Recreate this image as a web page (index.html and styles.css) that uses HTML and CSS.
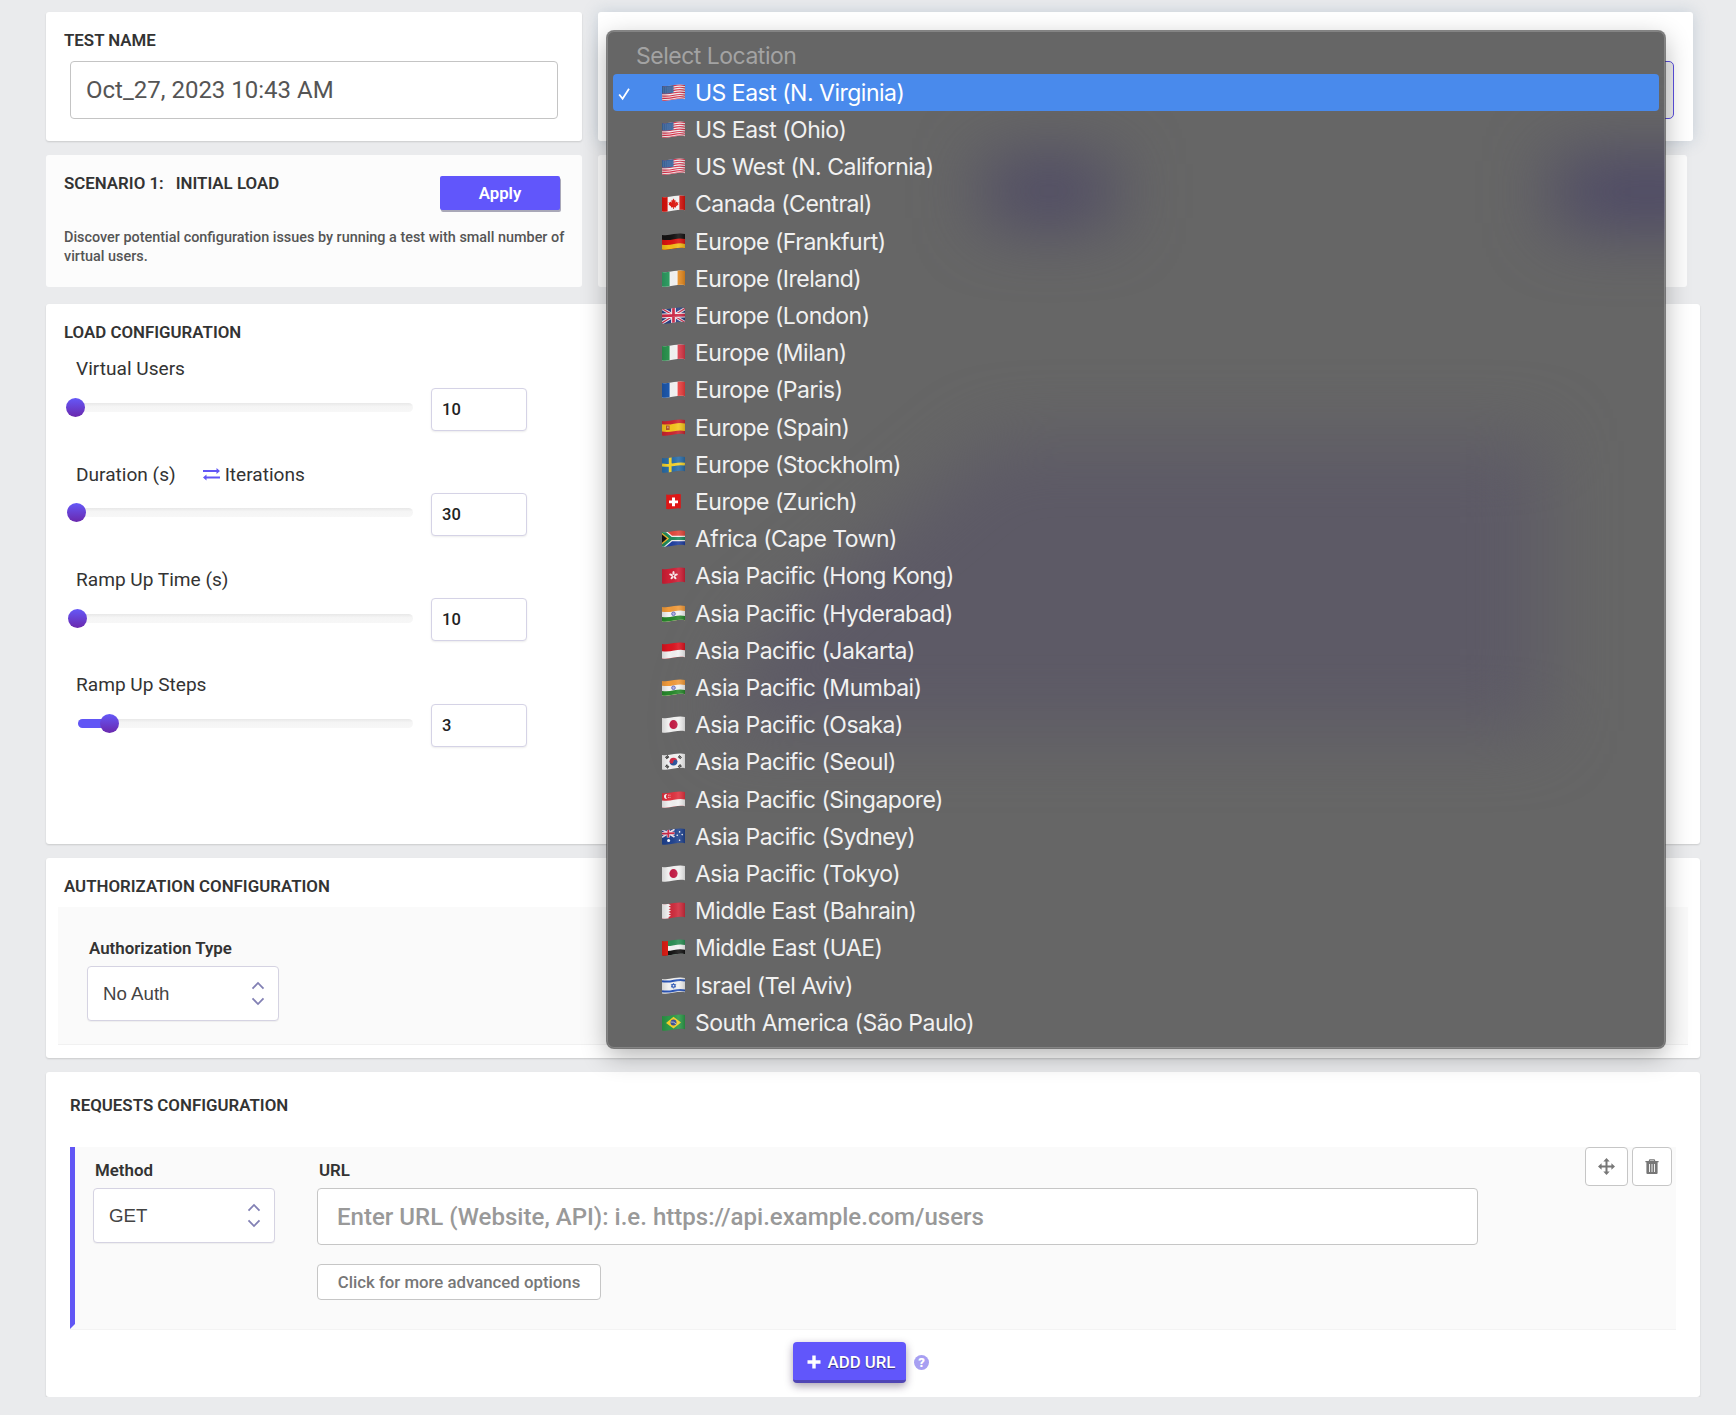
FILE: index.html
```html
<!DOCTYPE html>
<html lang="en">
<head>
    <meta charset="UTF-8">
    <meta name="viewport" content="width=device-width, initial-scale=1.0">
    <title>Load Test</title>
    <link rel="stylesheet" href="styles.css">
</head>
<body>

    <!-- Flag and icon symbols -->
    <svg class="symbols" width="0" height="0" aria-hidden="true">
        <defs>
            <clipPath id="wave"><path d="M0 1.9 C4 2.6 8 1.9 12 1.1 C16 .3 20 .2 23 1 V15.2 C20 14.5 16 14.7 12 15.5 C8 16.3 4 17 0 16.4Z"/></clipPath>
            <linearGradient id="shade" x1="0" x2="1" y1="0" y2="0">
                <stop offset="0" stop-color="#000" stop-opacity=".12"/>
                <stop offset=".3" stop-color="#000" stop-opacity="0"/>
                <stop offset=".7" stop-color="#fff" stop-opacity=".1"/>
                <stop offset="1" stop-color="#000" stop-opacity=".16"/>
            </linearGradient>
            <filter id="soft" x="-50%" y="-50%" width="200%" height="200%" color-interpolation-filters="sRGB"><feGaussianBlur stdDeviation="34"/></filter>
        </defs>
        <symbol id="us" viewBox="0 0 23 17"><g clip-path="url(#wave)"><path fill="#f4eef0" d="M0 0h23v17H0z"/><path stroke="#d8324a" stroke-width="1.15" fill="none" d="M0 2.4q6 .6 12-.8t11-.1M0 4.8q6 .6 12-.8t11-.1M0 7.2q6 .6 12-.8t11-.1M0 9.6q6 .6 12-.8t11-.1M0 12q6 .6 12-.8t11-.1M0 14.2q6 .6 12-.8t11-.1M0 16.4q6 .6 12-.8t11-.1"/><path fill="#3d679f" d="M0 0h11.5v8.8q-6 1.2-11.5.8z"/><path stroke="#9fb9d6" stroke-width=".6" stroke-dasharray=".7 1.2" fill="none" d="M1 4h10M1 6h10M1 8h10"/><path fill="url(#shade)" d="M0 0h23v17H0z"/></g></symbol>
        <symbol id="ca" viewBox="0 0 23 17"><g clip-path="url(#wave)"><path fill="#f4f4f4" d="M0 0h23v17H0z"/><path fill="#d8130d" d="M0 0h5.6v17H0zM17.4 0H23v17h-5.6z"/><path fill="#e01a12" d="M11.5 3.6l1.2 2 1-.4-.3 2.6 1.3-1.2.4.9 1.4-.2-.6 1.6.7.5-2.7 2.2.2 1-2.2-.3v1.6h-.8v-1.6l-2.2.3.2-1-2.7-2.2.7-.5-.6-1.6 1.4.2.4-.9 1.3 1.2-.3-2.6 1 .4z"/><path fill="url(#shade)" d="M0 0h23v17H0z"/></g></symbol>
        <symbol id="de" viewBox="0 0 23 17"><g clip-path="url(#wave)"><path fill="#141212" d="M0 0h23v17H0z"/><path fill="#dc1410" d="M0 6.8q6 .8 12-.6t11-.1V17H0z"/><path fill="#f3bd16" d="M0 11.7q6 .8 12-.6t11-.1V17H0z"/><path fill="url(#shade)" d="M0 0h23v17H0z"/></g></symbol>
        <symbol id="ie" viewBox="0 0 23 17"><g clip-path="url(#wave)"><path fill="#f4f4f4" d="M0 0h23v17H0z"/><path fill="#2f9d63" d="M0 0h7.6v17H0z"/><path fill="#e58a1f" d="M15.6 0H23v17h-7.4z"/><path fill="url(#shade)" d="M0 0h23v17H0z"/></g></symbol>
        <symbol id="gb" viewBox="0 0 23 17"><g clip-path="url(#wave)"><path fill="#283f83" d="M0 0h23v17H0z"/><path stroke="#efeaf0" stroke-width="3.2" d="M0 1.5l23 14M0 16L23 1.5"/><path stroke="#d02a48" stroke-width="1.1" d="M0 1.5l23 14M0 16L23 1.5"/><path stroke="#f4eef2" stroke-width="4.8" d="M11.5 0v17M0 8.9l23-.8"/><path stroke="#d02a48" stroke-width="2.7" d="M11.5 0v17M0 8.9l23-.8"/><path fill="url(#shade)" d="M0 0h23v17H0z"/></g></symbol>
        <symbol id="it" viewBox="0 0 23 17"><g clip-path="url(#wave)"><path fill="#f4f4f4" d="M0 0h23v17H0z"/><path fill="#2c9550" d="M0 0h7.6v17H0z"/><path fill="#d93646" d="M15.6 0H23v17h-7.4z"/><path fill="url(#shade)" d="M0 0h23v17H0z"/></g></symbol>
        <symbol id="fr" viewBox="0 0 23 17"><g clip-path="url(#wave)"><path fill="#f4f4f4" d="M0 0h23v17H0z"/><path fill="#1c58ad" d="M0 0h7.6v17H0z"/><path fill="#ea3c3c" d="M15.6 0H23v17h-7.4z"/><path fill="url(#shade)" d="M0 0h23v17H0z"/></g></symbol>
        <symbol id="es" viewBox="0 0 23 17"><g clip-path="url(#wave)"><path fill="#cb2530" d="M0 0h23v17H0z"/><path fill="#f5c71c" d="M0 5.3q6 .8 12-.6t11-.1v7.4q-5-1-11 .2t-12 .4z"/><path fill="#b0562c" d="M4 6.5h3.6v4.4H4z"/><path fill="#e3b19a" d="M5.2 7.6h1.3v1.6H5.2z"/><path fill="url(#shade)" d="M0 0h23v17H0z"/></g></symbol>
        <symbol id="se" viewBox="0 0 23 17"><g clip-path="url(#wave)"><path fill="#2a6da8" d="M0 0h23v17H0z"/><path stroke="#f5d22c" stroke-width="2.8" fill="none" d="M8.2 0v17M0 9q6 .8 12-.4t11-.4"/><path fill="url(#shade)" d="M0 0h23v17H0z"/></g></symbol>
        <symbol id="ch" viewBox="0 0 23 17"><path fill="#dd1717" d="M4.2 1.6q4 .6 7.4-.2t7.2-.2v14.2q-4-.4-7.4.3t-7.2.4z"/><path fill="#fff" d="M10 4.5h3v2.9h3v2.9h-3v2.9h-3v-2.9H7V7.4h3z"/></symbol>
        <symbol id="za" viewBox="0 0 23 17"><g clip-path="url(#wave)"><path fill="#e3483c" d="M0 0h23v8H0z"/><path fill="#1f3ea0" d="M0 8.5h23V17H0z"/><path stroke="#f2f2f2" stroke-width="5.6" fill="none" d="M-1 0l10 8.5L-1 17M9 8.5h14"/><path stroke="#1f8a5c" stroke-width="3.2" fill="none" d="M-1 0l10 8.5L-1 17M9 8.5h14"/><path fill="#f0b62a" d="M0 2.8l7 5.7-7 6z"/><path fill="#111" d="M0 4.4l5 4.1-5 4.3z"/><path fill="url(#shade)" d="M0 0h23v17H0z"/></g></symbol>
        <symbol id="hk" viewBox="0 0 23 17"><g clip-path="url(#wave)"><path fill="#cf1f36" d="M0 0h23v17H0z"/><g fill="#fbe9ec"><ellipse cx="11.5" cy="6" rx="1.1" ry="2"/><ellipse cx="11.5" cy="6" rx="1.1" ry="2" transform="rotate(72 11.5 8.5)"/><ellipse cx="11.5" cy="6" rx="1.1" ry="2" transform="rotate(144 11.5 8.5)"/><ellipse cx="11.5" cy="6" rx="1.1" ry="2" transform="rotate(216 11.5 8.5)"/><ellipse cx="11.5" cy="6" rx="1.1" ry="2" transform="rotate(288 11.5 8.5)"/></g><path fill="url(#shade)" d="M0 0h23v17H0z"/></g></symbol>
        <symbol id="in" viewBox="0 0 23 17"><g clip-path="url(#wave)"><path fill="#f29b3a" d="M0 0h23v17H0z"/><path fill="#f4f4f4" d="M0 6.8q6 .8 12-.6t11-.3V17H0z"/><path fill="#28892c" d="M0 11.9q6 .8 12-.6t11-.3V17H0z"/><circle cx="11.5" cy="8.8" r="1.8" fill="#b4b4e4" stroke="#5058b4" stroke-width=".8"/><path fill="url(#shade)" d="M0 0h23v17H0z"/></g></symbol>
        <symbol id="id" viewBox="0 0 23 17"><g clip-path="url(#wave)"><path fill="#dc1420" d="M0 0h23v17H0z"/><path fill="#f2f2f2" d="M0 9.2q6 .8 12-.6t11-.4V17H0z"/><path fill="url(#shade)" d="M0 0h23v17H0z"/></g></symbol>
        <symbol id="jp" viewBox="0 0 23 17"><g clip-path="url(#wave)"><path fill="#f2f2f2" d="M0 0h23v17H0z"/><ellipse cx="11.5" cy="8.6" rx="4.1" ry="4.5" fill="#c41c46"/><path fill="url(#shade)" d="M0 0h23v17H0z"/></g></symbol>
        <symbol id="kr" viewBox="0 0 23 17"><g clip-path="url(#wave)"><path fill="#f2f2f2" d="M0 0h23v17H0z"/><path fill="#cf2b44" d="M7.6 8.6a3.9 3.9 0 0 1 7.8 0z"/><path fill="#24529c" d="M7.6 8.6a3.9 3.9 0 0 0 7.8 0z"/><circle cx="9.6" cy="8.6" r="1.9" fill="#cf2b44"/><circle cx="13.4" cy="8.6" r="1.9" fill="#24529c"/><path stroke="#222" stroke-width="2.8" stroke-dasharray=".9 .3" d="M4 5.2l2.4-2.1M16.6 3.1L19 5.2M4 12.4l2.4 2.2M16.6 14.2l2.4-2.1"/><path fill="url(#shade)" d="M0 0h23v17H0z"/></g></symbol>
        <symbol id="sg" viewBox="0 0 23 17"><g clip-path="url(#wave)"><path fill="#e0323f" d="M0 0h23v17H0z"/><path fill="#f2f2f2" d="M0 9.4q6 .8 12-.6t11-.4V17H0z"/><path fill="#fff" d="M5 3.2a2.4 2.4 0 1 0 0 4.6 3 3 0 0 1 0-4.6z"/><path stroke="#fff" stroke-width=".8" stroke-dasharray=".8 .8" d="M6 4.2h3M6 6.4h3"/><path fill="url(#shade)" d="M0 0h23v17H0z"/></g></symbol>
        <symbol id="au" viewBox="0 0 23 17"><g clip-path="url(#wave)"><path fill="#204390" d="M0 0h23v17H0z"/><path stroke="#eee4ec" stroke-width="1.8" d="M0 1.5l12.5 7.6M0 9.3l12.5-8"/><path stroke="#eee4ec" stroke-width="3" d="M6.3 0v9.6M0 5.6l12.5-.4"/><path stroke="#d02a48" stroke-width="1.7" d="M6.3 0v9.6M0 5.6l12.5-.4"/><g fill="#fff"><circle cx="6.6" cy="12.4" r="1.5"/><circle cx="17.6" cy="3.9" r=".8"/><circle cx="15.2" cy="7.3" r=".8"/><circle cx="20.2" cy="6.6" r=".8"/><circle cx="17.6" cy="12.2" r=".8"/></g><path fill="url(#shade)" d="M0 0h23v17H0z"/></g></symbol>
        <symbol id="bh" viewBox="0 0 23 17"><g clip-path="url(#wave)"><path fill="#cf2b3c" d="M0 0h23v17H0z"/><path fill="#f2f2f2" d="M0 0h6.6v2L9 3.3 6.6 4.6 9 6 6.6 7.3 9 8.6 6.6 9.9 9 11.2 6.6 12.5 9 13.8 6.6 15.1V17H0z"/><path fill="url(#shade)" d="M0 0h23v17H0z"/></g></symbol>
        <symbol id="ae" viewBox="0 0 23 17"><g clip-path="url(#wave)"><path fill="#2c8f55" d="M0 0h23v17H0z"/><path fill="#f4f4f4" d="M0 6.8q6 .8 12-.6t11-.3V17H0z"/><path fill="#141414" d="M0 11.7q6 .8 12-.6t11-.3V17H0z"/><path fill="#e01e16" d="M0 0h6v17H0z"/><path fill="url(#shade)" d="M0 0h23v17H0z"/></g></symbol>
        <symbol id="il" viewBox="0 0 23 17"><g clip-path="url(#wave)"><path fill="#f2f2f2" d="M0 0h23v17H0z"/><path stroke="#2a55b8" stroke-width="2" fill="none" d="M0 4.3q6 .8 12-.6t11-.3M0 14.3q6 .8 12-.6t11-.3"/><path stroke="#2a55b8" stroke-width=".8" fill="none" d="M11.5 6.3l2.2 3.7H9.3zM11.5 11.3L9.3 7.5h4.4z"/><path fill="url(#shade)" d="M0 0h23v17H0z"/></g></symbol>
        <symbol id="br" viewBox="0 0 23 17"><g clip-path="url(#wave)"><path fill="#2c9a48" d="M0 0h23v17H0z"/><path fill="#f5d02a" d="M11.5 2.8l7.5 5.6-7.5 6L4 8.9z"/><circle cx="11.5" cy="8.6" r="3" fill="#3a4f96"/><path stroke="#dfe6f0" stroke-width=".7" fill="none" d="M8.7 8q3-.5 5.4 1.8"/><path fill="url(#shade)" d="M0 0h23v17H0z"/></g></symbol>
        <symbol id="updown" viewBox="0 0 14 26"><path fill="none" stroke="#8280b4" stroke-width="1.8" d="M1.5 7.7L7 2l5.500 5.700M1.500 17.300L7 23l5.500-5.700"/></symbol>
    </svg>

    <main class="page">
        <!-- Test name and location -->
        <div class="row">
            <section class="card name-card">
                <h2>TEST NAME</h2>
                <input class="name-input" type="text" value="Oct_27, 2023 10:43 AM">
            </section>

            <section class="card location-card">
                <div class="location-select"></div>

                <div class="menu">
                    <svg class="menu-tint" viewBox="0 0 1060 1018" aria-hidden="true">
                        <g filter="url(#soft)">
                            <rect x="380" y="130" width="124" height="60" fill="#4b4664"/>
                            <rect x="950" y="128" width="180" height="66" fill="#4a4565"/>
                            <path fill="#5d5a66" d="M390 410H935V700H110L150 610Z"/>
                        </g>
                    </svg>
                    <div class="menu-title">Select Location</div>
                    <ul>
                        <li class="selected"><svg class="check" viewBox="0 0 12 14"><path d="M1.200 7.500l3.400 4.300L11 1.800"/></svg><svg class="flag"><use href="#us"/></svg>US East (N. Virginia)</li>
                        <li><svg class="flag"><use href="#us"/></svg>US East (Ohio)</li>
                        <li><svg class="flag"><use href="#us"/></svg>US West (N. California)</li>
                        <li><svg class="flag"><use href="#ca"/></svg>Canada (Central)</li>
                        <li><svg class="flag"><use href="#de"/></svg>Europe (Frankfurt)</li>
                        <li><svg class="flag"><use href="#ie"/></svg>Europe (Ireland)</li>
                        <li><svg class="flag"><use href="#gb"/></svg>Europe (London)</li>
                        <li><svg class="flag"><use href="#it"/></svg>Europe (Milan)</li>
                        <li><svg class="flag"><use href="#fr"/></svg>Europe (Paris)</li>
                        <li><svg class="flag"><use href="#es"/></svg>Europe (Spain)</li>
                        <li><svg class="flag"><use href="#se"/></svg>Europe (Stockholm)</li>
                        <li><svg class="flag"><use href="#ch"/></svg>Europe (Zurich)</li>
                        <li><svg class="flag"><use href="#za"/></svg>Africa (Cape Town)</li>
                        <li><svg class="flag"><use href="#hk"/></svg>Asia Pacific (Hong Kong)</li>
                        <li><svg class="flag"><use href="#in"/></svg>Asia Pacific (Hyderabad)</li>
                        <li><svg class="flag"><use href="#id"/></svg>Asia Pacific (Jakarta)</li>
                        <li><svg class="flag"><use href="#in"/></svg>Asia Pacific (Mumbai)</li>
                        <li><svg class="flag"><use href="#jp"/></svg>Asia Pacific (Osaka)</li>
                        <li><svg class="flag"><use href="#kr"/></svg>Asia Pacific (Seoul)</li>
                        <li><svg class="flag"><use href="#sg"/></svg>Asia Pacific (Singapore)</li>
                        <li><svg class="flag"><use href="#au"/></svg>Asia Pacific (Sydney)</li>
                        <li><svg class="flag"><use href="#jp"/></svg>Asia Pacific (Tokyo)</li>
                        <li><svg class="flag"><use href="#bh"/></svg>Middle East (Bahrain)</li>
                        <li><svg class="flag"><use href="#ae"/></svg>Middle East (UAE)</li>
                        <li><svg class="flag"><use href="#il"/></svg>Israel (Tel Aviv)</li>
                        <li><svg class="flag"><use href="#br"/></svg>South America (São Paulo)</li>
                    </ul>
                </div>
            </section>
        </div>

        <!-- Scenarios -->
        <div class="row scenarios">
            <section class="scenario first">
                <div class="scenario-head">
                    <h2><span>SCENARIO 1:</span><span>INITIAL LOAD</span></h2>
                    <button class="apply-btn">Apply</button>
                </div>
                <p>Discover potential configuration issues by running a test with small number of virtual users.</p>
            </section>
            <section class="scenario rest"></section>
        </div>

        <!-- Load configuration -->
        <section class="card load-card">
            <h2>LOAD CONFIGURATION</h2>

            <div class="slider-group">
                <div class="label">Virtual Users</div>
                <div class="slider-row">
                    <div class="track"><span class="knob" style="left: -2px"></span></div>
                    <input type="text" value="10">
                </div>
            </div>
            <div class="slider-group">
                <div class="label">Duration (s)
                    <a class="toggle"><svg width="17" height="14" viewBox="0 0 17 14"><path fill="none" stroke="#6156f5" stroke-width="2" d="M0 4h14M3 10.500h14"/><path fill="#6156f5" d="M13.500 1L17 4l-3.500 3zM3.500 7.500L0 10.500l3.500 3z"/></svg>Iterations</a>
                </div>
                <div class="slider-row">
                    <div class="track"><span class="knob" style="left: -1px"></span></div>
                    <input type="text" value="30">
                </div>
            </div>
            <div class="slider-group">
                <div class="label">Ramp Up Time (s)</div>
                <div class="slider-row">
                    <div class="track"><span class="knob" style="left: 0px"></span></div>
                    <input type="text" value="10">
                </div>
            </div>
            <div class="slider-group">
                <div class="label">Ramp Up Steps</div>
                <div class="slider-row">
                    <div class="track"><span class="fill" style="width: 30px"></span><span class="knob" style="left: 32px"></span></div>
                    <input type="text" value="3">
                </div>
            </div>
        </section>

        <!-- Authorization -->
        <section class="card auth-card">
            <h2>AUTHORIZATION CONFIGURATION</h2>
            <div class="auth-body">
                <label>Authorization Type</label>
                <div class="select auth-select">No Auth<svg class="updown"><use href="#updown"/></svg></div>
            </div>
        </section>

        <!-- Requests -->
        <section class="card requests-card">
            <h2>REQUESTS CONFIGURATION</h2>
            <div class="request">
                <div class="method-col">
                    <label>Method</label>
                    <div class="select method-select">GET<svg class="updown"><use href="#updown"/></svg></div>
                </div>
                <div class="url-col">
                    <label>URL</label>
                    <input class="url-input" type="text" placeholder="Enter URL (Website, API): i.e. https://api.example.com/users">
                    <button class="more-btn">Click for more advanced options</button>
                </div>
                <div class="tools">
                    <button class="move-btn"><svg width="17" height="17" viewBox="0 0 17 17"><path stroke="#777" stroke-width="2" d="M8.500 2.500v12M2.500 8.500h12"/><path fill="#777" d="M8.500 0l3.200 3.600H5.300zM8.500 17l3.200-3.600H5.300zM0 8.500l3.600-3.200v6.400zM17 8.500l-3.600-3.200v6.400z"/></svg></button>
                    <button class="trash-btn"><svg width="14" height="15" viewBox="0 0 14 15"><path fill="none" stroke="#777" stroke-width="1.200" d="M4.200 2.300L4.800.8h4.400l.6 1.500"/><path fill="#777" d="M.4 2h13.200v1.300h-1V14q0 1-1 1H2.400q-1 0-1-1V3.300h-1z"/><path stroke="#eee" stroke-width="1" d="M4.500 5v8M7 5v8M9.500 5v8"/></svg></button>
                </div>
            </div>
            <div class="add-row">
                <button class="add-btn"><svg width="14" height="14" viewBox="0 0 14 14"><path stroke="#fff" stroke-width="3.400" d="M7 .5v13M.5 7h13"/></svg>ADD URL</button>
                <span class="help">?</span>
            </div>
        </section>
    </main>
</body>
</html>
```

FILE: styles.css
```css
/* Basic Styles */
* {
    box-sizing: border-box;
}

body {
    font-family: Roboto, sans-serif;
    margin: 0;
    background-color: #eaebed;
    color: #333;
}

h2 {
    margin: 0;
    font-size: 16.85px;
    line-height: 20px;
    font-weight: 600;
}

button,
input {
    font-family: inherit;
}

.symbols {
    position: absolute;
}

.page {
    width: 1654px;
    margin-left: 46px;
    padding-top: 12px;
}

.row {
    display: flex;
    gap: 16px;
}

.card {
    background-color: #fff;
    border-radius: 3px;
    box-shadow: 0 1px 2px rgba(0, 0, 0, 0.14);
}

/* Test name */
.name-card {
    width: 536px;
    height: 129px;
    padding: 18px 24px 0 18px;
}

.name-input {
    display: block;
    width: 488px;
    height: 58px;
    margin: 11px 0 0 6px;
    padding: 0 15px;
    border: 1px solid #c4c4c4;
    border-radius: 4px;
    font-size: 24px;
    color: #555;
}

/* Location dropdown */
.location-card {
    position: relative;
    width: 1095px;
    height: 129px;
    padding: 49px 19px 0 18px;
    box-shadow: 0 0 16px rgba(110, 140, 165, 0.3);
}

.location-select {
    height: 58px;
    border: 1px solid #5b4fe0;
    border-radius: 5px;
    background-color: #eee;
}

.menu {
    position: absolute;
    z-index: 10;
    top: 19px;
    left: 9px;
    width: 1058px;
    height: 1017px;
    padding: 6px 6px 6px 5px;
    border-radius: 7px;
    background-color: #666;
    box-shadow: 0 0 0 1px rgba(60, 60, 60, 0.6), 0 8px 26px rgba(0, 0, 0, 0.3);
    overflow: hidden;
    font-family: Inter, sans-serif;
    font-size: 23px;
    letter-spacing: -0.5px;
    color: #f1f1f1;
}

.menu::after {
    content: "";
    position: absolute;
    inset: 0;
    border: 1px solid rgba(255, 255, 255, 0.2);
    border-radius: 7px;
}

.menu-tint {
    position: absolute;
    inset: 0;
    width: 1060px;
    height: 1018px;
}

.menu-title {
    position: relative;
    height: 37.2px;
    line-height: 38px;
    padding-left: 24px;
    color: #a3a3a3;
}

.menu ul {
    position: relative;
    margin: 0;
    padding: 0;
    list-style: none;
}

.menu li {
    display: flex;
    align-items: center;
    height: 37.21px;
    padding-left: 50px;
    white-space: pre;
}

.menu li.selected {
    padding-left: 5px;
    margin-left: 1px;
    border-radius: 4px;
    background-color: #498aec;
    color: #fff;
}

.check {
    width: 12px;
    height: 14px;
    margin: 3px 32px 0 0;
    fill: none;
    stroke: #fff;
    stroke-width: 1.8;
}

.flag {
    width: 23px;
    height: 17px;
    margin-right: 10px;
    margin-top: -1px;
}

/* Scenarios */
.scenarios {
    margin-top: 14px;
}

.scenario {
    height: 132px;
    border-radius: 3px;
    background-color: #fcfcfc;
}

.scenario.first {
    width: 536px;
    padding: 18px 16px 0 18px;
}

.scenario.rest {
    width: 1089px;
}

.scenario-head {
    display: flex;
    justify-content: space-between;
    padding-right: 6px;
}

.scenario h2 {
    display: flex;
    gap: 12px;
}

.scenario p {
    margin: 18px -8px 0 0;
    font-size: 14.4px;
    font-weight: 500;
    line-height: 19.3px;
    color: #555;
}

.apply-btn {
    width: 120px;
    height: 34px;
    margin-top: 3px;
    border: none;
    border-radius: 2px;
    background-color: #6156fb;
    box-shadow: 1px 2px 0 #a9a8b8;
    color: #fff;
    font-size: 16.8px;
    font-weight: 600;
}

/* Load configuration */
.load-card {
    height: 540px;
    margin-top: 17px;
    padding: 18px;
}

.slider-group {
    height: 105.4px;
    padding-left: 4px;
}

.label {
    display: flex;
    align-items: center;
    gap: 27px;
    height: 45.5px;
    padding: 10px 0 2px 8px;
    font-size: 19.1px;
    line-height: 33px;
}

.toggle {
    display: flex;
    align-items: center;
    gap: 5px;
}

.slider-row {
    display: flex;
    align-items: center;
    gap: 18px;
}

.track {
    position: relative;
    width: 335px;
    height: 9px;
    margin: -3px 0 0 10px;
    border-radius: 5px;
    background: linear-gradient(#e8e8e8, #f5f5f5 40%, #f7f7f7);
}

.fill {
    display: block;
    height: 9px;
    border-radius: 5px;
    background-color: #6156f5;
}

.knob {
    position: absolute;
    top: -5px;
    width: 19px;
    height: 19px;
    margin-left: -10px;
    border-radius: 50%;
    background: linear-gradient(#6558f8, #6a28ad);
}

.slider-row input {
    width: 96px;
    height: 43px;
    padding: 0 10px;
    border: 1px solid #d5d3e6;
    border-radius: 4px;
    box-shadow: 0 1px 2px rgba(0, 0, 0, 0.08);
    font-size: 16.5px;
    font-weight: 500;
    color: #222;
}

/* Authorization */
.auth-card {
    height: 200px;
    margin-top: 14px;
    padding: 18px 12px 0;
}

.auth-card h2 {
    padding-left: 6px;
}

.auth-body {
    height: 138px;
    margin-top: 11px;
    padding: 31px 29px 0;
    background-color: #fafafa;
    border-bottom: 1px solid #f1f1f1;
}

label {
    display: block;
    padding-left: 2px;
    font-size: 16.9px;
    line-height: 20px;
    font-weight: 600;
}

.select {
    display: flex;
    align-items: center;
    justify-content: space-between;
    height: 55px;
    padding: 0 13px 0 15px;
    border: 1px solid #d5d3e2;
    border-radius: 4px;
    background-color: #fff;
    box-shadow: 0 1px 1px rgba(0, 0, 0, 0.05);
    font-family: "Liberation Sans", Arial, sans-serif;
    font-size: 18.7px;
    color: #444;
}

.updown {
    width: 14px;
    height: 26px;
}

.auth-select {
    width: 192px;
    margin-top: 8px;
}

/* Requests */
.requests-card {
    height: 325px;
    margin-top: 14px;
    padding: 23px 24px 0;
}

.request {
    display: flex;
    height: 182px;
    margin-top: 32px;
    border-left: 5px solid #6156f5;
    border-bottom: 5px solid #fafafa;
    box-shadow: 0 1px 0 #f3f3f3;
    background-color: #fafafa;
}

.method-col {
    width: 182px;
    margin-left: 18px;
    padding-top: 13px;
}

.method-select {
    margin-top: 8px;
}

.url-col {
    width: 1161px;
    margin-left: 42px;
    padding-top: 13px;
}

.url-input {
    display: block;
    width: 100%;
    height: 57px;
    margin-top: 8px;
    padding: 0 19px;
    border: 1px solid #c6c6c6;
    border-radius: 4px;
    font-size: 24.05px;
    font-weight: 500;
}

.url-input::placeholder {
    color: #999;
}

.more-btn {
    width: 284px;
    height: 36px;
    margin-top: 19px;
    padding: 0;
    border: 1px solid #c6c6c6;
    border-radius: 4px;
    background-color: #fff;
    color: #777;
    font-size: 16.8px;
    font-weight: 500;
}

.tools {
    display: flex;
    gap: 4px;
    margin-left: 107px;
}

.tools button {
    display: flex;
    align-items: center;
    justify-content: center;
    width: 40px;
    height: 39px;
    padding: 0;
    border: 1px solid #c6c6c6;
    border-radius: 4px;
    background-color: #fff;
}

.tools .move-btn {
    width: 43px;
}

.add-row {
    display: flex;
    align-items: center;
    justify-content: center;
    gap: 8px;
    margin-top: 13px;
    padding-right: 24px;
}

.add-btn {
    display: flex;
    align-items: center;
    justify-content: center;
    gap: 7px;
    width: 113px;
    height: 41px;
    padding: 2px 0 0 3px;
    border: none;
    border-bottom: 3px solid #5045b5;
    border-radius: 4px;
    background-color: #6156fb;
    box-shadow: 0 3px 8px rgba(40, 20, 60, 0.4);
    color: #fff;
    font-size: 16.8px;
    font-weight: 500;
    text-shadow: 0 1px 1px rgba(0, 0, 0, 0.5);
}

.help {
    width: 15px;
    height: 15px;
    border-radius: 50%;
    background-color: #a79ff2;
    color: #fff;
    font-size: 13px;
    font-weight: 900;
    line-height: 15px;
    text-align: center;
}
```
